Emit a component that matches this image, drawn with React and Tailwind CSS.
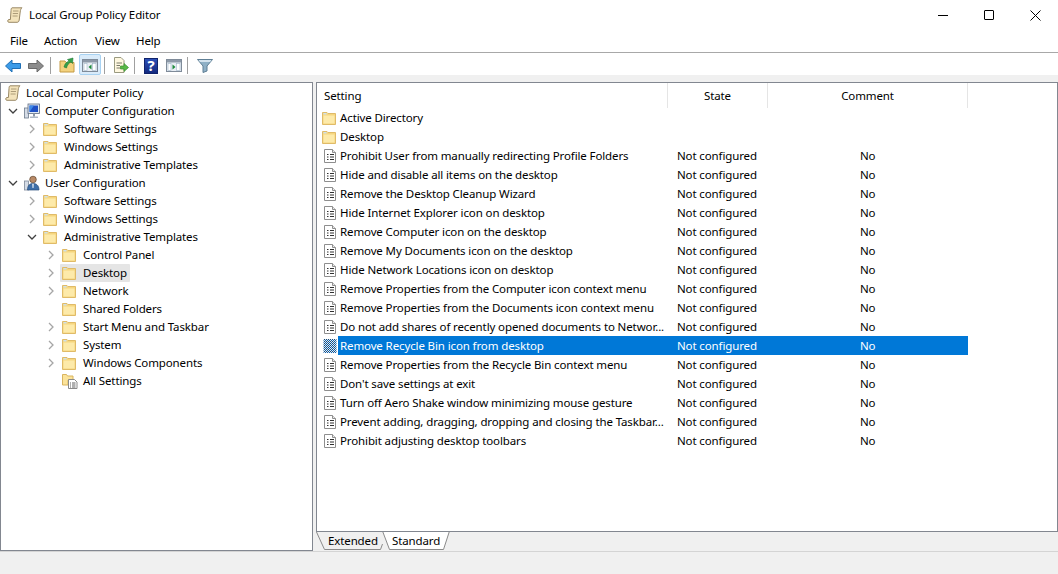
import React from 'react';

const Chevron = ({ open }) => (
    <svg width="10" height="10" viewBox="0 0 10 10" fill="none" stroke={open ? '#404040' : '#a6a6a6'} strokeWidth="1.3">
        {open ? <path d="M1 3 L5 7 L9 3" /> : <path d="M3 1 L7 5 L3 9" />}
    </svg>
);

const Folder = () => (
    <svg width="16" height="16" viewBox="0 0 16 16" className="shrink-0">
        <path d="M.5 2.5 H5 L6 3.5 H13.5 V14.5 H.5 Z" fill="#f6d67f" stroke="#e0bb68" />
        <path d="M1.5 5.5 H12.5 V13.5 H1.5 Z" fill="#fdeaaa" />
        <path d="M1.5 3 H4.5 V4.5 H1.5 Z" fill="#cfe0ea" />
    </svg>
);

const Scroll = () => (
    <svg width="16" height="16" viewBox="0 0 16 16" className="shrink-0">
        <path d="M5 .8 H15 C13.8 1.8 13.4 3 13.2 5 L12.2 13 C12 14.6 11.2 15.3 10 15.3 H1.8 C.4 15.3 .3 12.8 1.8 12.5 H3.4 L4 3.5 C4.1 2 4.2 1.2 5 .8 Z" fill="#f3e3bb" stroke="#8f7d58" strokeWidth=".9" />
        <path d="M6 4 H11.5 M5.8 6.5 H11 M5.6 9 H10.6" stroke="#9a8a68" strokeWidth=".8" />
    </svg>
);

const Computer = () => (
    <svg width="16" height="16" viewBox="0 0 16 16" className="shrink-0">
        <rect x="0.5" y="5" width="4" height="10" fill="#d5dce6" stroke="#6d7a8c" strokeWidth=".8" />
        <rect x="4" y="1" width="11.5" height="9.5" fill="#dfe7f2" stroke="#5e6b80" strokeWidth=".8" />
        <rect x="5.5" y="2.5" width="8.5" height="6.5" fill="#1e4fc4" />
        <path d="M5.5 9 L10 2.5 H5.5 Z" fill="#3f8ae8" />
        <path d="M6 13.5 H14 V15 H6 Z" fill="#aeb8c6" />
        <path d="M9 10.5 H11 V13.5 H9 Z" fill="#8d98a8" />
    </svg>
);

const User = () => (
    <svg width="16" height="16" viewBox="0 0 16 16" className="shrink-0">
        <rect x="0.5" y="6" width="4" height="9" fill="#d5dce6" stroke="#7d8898" strokeWidth=".8" />
        <circle cx="9" cy="4.5" r="3.3" fill="#b98a66" stroke="#5e4630" strokeWidth=".7" />
        <path d="M3.5 15 C3.5 10 6 8.5 9 8.5 C12 8.5 15 10 15 15 Z" fill="#3f6fa8" stroke="#2a4f7c" strokeWidth=".7" />
        <path d="M8.2 8.7 H9.8 L9.5 13 H8.5 Z" fill="#e8eef5" />
    </svg>
);

const AllSettings = () => (
    <svg width="16" height="16" viewBox="0 0 16 16" className="shrink-0">
        <path d="M.5 1.5 H4.5 L5.5 3 H11 V7 H6 V12 H.5 Z" fill="#fbe39a" stroke="#d9b45f" />
        <path d="M6.5 6.5 H12.5 L15 9 V15.5 H6.5 Z" fill="#fff" stroke="#8a8a8a" />
        <path d="M8 10 H9 M10 10 H13.5 M8 12 H9 M10 12 H13.5 M8 14 H9 M10 14 H13.5" stroke="#606060" />
    </svg>
);

const Policy = ({ selected }) => (
    <svg width="14" height="16" viewBox="0 0 14 16" className="shrink-0">
        {selected ? (
            <>
                <defs>
                    <pattern id="dither" width="2" height="2" patternUnits="userSpaceOnUse">
                        <rect width="2" height="2" fill="#dbe9f5" />
                        <rect width="1" height="1" fill="#0f5fa8" />
                        <rect x="1" y="1" width="1" height="1" fill="#1a4a78" />
                    </pattern>
                </defs>
                <rect x="0.5" y="1" width="13" height="14" fill="url(#dither)" />
            </>
        ) : (
            <>
                <path d="M1.5 1.5 H9.5 L12.5 4.5 V14.5 H1.5 Z" fill="#fff" stroke="#8e8e8e" />
                <path d="M9.5 1.5 V4.5 H12.5" fill="#e8e8e8" stroke="#8e8e8e" />
                <path d="M4 6.5 H5.5 M7 6.5 H11 M4 9 H5.5 M7 9 H11 M4 11.5 H5.5 M7 11.5 H11" stroke="#303030" />
            </>
        )}
    </svg>
);

const WindowIcon = ({ arrow }) => (
    <svg width="16" height="13" viewBox="0 0 16 13">
        <rect x=".5" y=".5" width="15" height="12" fill="#e9eef4" stroke="#7f8b99" />
        <rect x="1" y="1" width="14" height="2.5" fill="#8d99a8" />
        <rect x="2" y="4.5" width="3" height="7" fill="#fff" stroke="#9fb4c8" strokeWidth=".6" />
        <rect x="10.5" y="4.5" width="3.5" height="7" fill="#fff" stroke="#9fb4c8" strokeWidth=".6" />
        {arrow === 'left'
            ? <path d="M9.5 5.5 V10.5 L6.5 8 Z" fill="#1e8a3c" />
            : <path d="M6.5 5.5 V10.5 L9.5 8 Z" fill="#1e8a3c" />}
    </svg>
);

const Sep = () => <div className="w-px h-[17px] bg-[#a0a0a0]" />;

const TreeRow = ({ level, chevron, icon, label, selected }) => (
    <div className="flex items-center h-[18px]" style={{ paddingLeft: level * 19 }}>
        <div className="w-[23px] pl-[7px] flex items-center shrink-0">
            {chevron && <Chevron open={chevron === 'open'} />}
        </div>
        <div className={`flex items-center h-[18px] -ml-[2px] pl-[2px] pr-[3px] gap-[5px] ${selected ? 'bg-[#e5e5e5] rounded-[1px]' : ''}`}>
            {icon}
            <span>{label}</span>
        </div>
    </div>
);

const settings = [
    'Prohibit User from manually redirecting Profile Folders',
    'Hide and disable all items on the desktop',
    'Remove the Desktop Cleanup Wizard',
    'Hide Internet Explorer icon on desktop',
    'Remove Computer icon on the desktop',
    'Remove My Documents icon on the desktop',
    'Hide Network Locations icon on desktop',
    'Remove Properties from the Computer icon context menu',
    'Remove Properties from the Documents icon context menu',
    'Do not add shares of recently opened documents to Networ...',
    'Remove Recycle Bin icon from desktop',
    'Remove Properties from the Recycle Bin context menu',
    "Don't save settings at exit",
    'Turn off Aero Shake window minimizing mouse gesture',
    'Prevent adding, dragging, dropping and closing the Taskbar...',
    'Prohibit adjusting desktop toolbars',
];

export default function App() {
    return (
        <div className="w-[1058px] h-[574px] bg-white text-[11.5px] leading-none text-black flex flex-col overflow-hidden tracking-[-0.12px]" style={{ fontFamily: '"Noto Sans", sans-serif' }}>
            {/* Title bar */}
            <div className="h-[30px] flex items-center pl-[7px] shrink-0">
                <Scroll />
                <span className="ml-[6px]">Local Group Policy Editor</span>
                <div className="ml-auto flex items-center">
                    <div className="w-[46px] h-[30px] flex items-center justify-center">
                        <div className="w-[10px] h-px bg-black" />
                    </div>
                    <div className="w-[46px] h-[30px] flex items-center justify-center">
                        <div className="w-[10px] h-[10px] border border-black rounded-[1px]" />
                    </div>
                    <div className="w-[46px] h-[30px] flex items-center justify-center">
                        <svg width="11" height="11" viewBox="0 0 11 11" stroke="#000"><path d="M.5 .5 L10.5 10.5 M10.5 .5 L.5 10.5" /></svg>
                    </div>
                </div>
            </div>

            {/* Menu */}
            <div className="h-[23px] flex items-center gap-[16px] pl-[10px] border-b border-[#a8a8a8] shrink-0">
                <span className="w-[18px]">File</span>
                <span className="w-[35px]">Action</span>
                <span className="w-[25px]">View</span>
                <span>Help</span>
            </div>

            {/* Toolbar */}
            <div className="h-[22px] flex items-center pl-[5px] shrink-0">
                <svg width="16" height="14" viewBox="0 0 16 14" className="mt-[3px]"><path d="M.5 7 L7 1 V4.5 H15.5 V9.5 H7 V13 Z" fill="#3b9be8" stroke="#1f6fb5" /></svg>
                <svg width="16" height="14" viewBox="0 0 16 14" className="ml-[7px] mt-[3px]"><path d="M15.5 7 L9 1 V4.5 H.5 V9.5 H9 V13 Z" fill="#8c8c8c" stroke="#6a6a6a" /></svg>
                <div className="ml-[6px] mt-[3px]"><Sep /></div>
                <svg width="16" height="16" viewBox="0 0 16 16" className="ml-[8px] mt-[2px]">
                    <path d="M1 4 H6 L7 5.5 H15 V15 H1 Z" fill="#f3d27e" stroke="#c49b45" />
                    <path d="M5 10 C6 6 8 5 10 4 L8.5 2.5 L14 1 L13.5 6.5 L12 5 C10 6 8 8 7.5 11 Z" fill="#35a04a" stroke="#1f7a35" strokeWidth=".6" />
                </svg>
                <div className="ml-[4px] w-[22px] h-[21px] bg-[#d9ebfa] border border-[#a8d2f2] rounded-[2px] flex items-center justify-center">
                    <div className="mt-[3px]"><WindowIcon arrow="left" /></div>
                </div>
                <div className="ml-[3px] mt-[3px]"><Sep /></div>
                <svg width="16" height="16" viewBox="0 0 16 16" className="ml-[8px] mt-[2px]">
                    <path d="M1.5 .5 H8 L11 3.5 V15.5 H1.5 Z" fill="#fff8e0" stroke="#9a9a80" />
                    <path d="M3.5 6 H9 M3.5 8.5 H7 M3.5 11 H7" stroke="#7a7a6a" />
                    <path d="M7.5 9 H11 V6.5 L15.5 10.5 L11 14.5 V12 H7.5 Z" fill="#58b947" stroke="#3a8f2f" strokeWidth=".7" />
                </svg>
                <div className="ml-[5px] mt-[3px]"><Sep /></div>
                <div className="ml-[9px] mt-[3px] w-[14px] h-[16px] bg-gradient-to-b from-[#2c4fb8] to-[#142a80] border border-[#10236b] flex items-center justify-center text-white font-bold text-[15px]">?</div>
                <div className="ml-[8px] mt-[3px]"><WindowIcon arrow="right" /></div>
                <div className="ml-[5px] mt-[3px]"><Sep /></div>
                <svg width="16" height="14" viewBox="0 0 16 14" className="ml-[9px] mt-[3px]">
                    <path d="M.5 .5 H15.5 L10 7 V12 L6 13.5 V7 Z" fill="#8fb0c6" stroke="#5f7f95" />
                    <path d="M1.5 1 H14.5 L13 3 H3 Z" fill="#d4e3ee" />
                </svg>
            </div>

            {/* Panes */}
            <div className="flex-1 bg-[#f0f0f0] pt-[7px] flex min-h-0">
                <div className="w-[313px] h-[469px] bg-white border border-[#828790] pt-[1px] shrink-0">
                    <div className="flex items-center h-[18px] pl-[4px] gap-[5px]">
                        <Scroll />
                        <span>Local Computer Policy</span>
                    </div>
                    <TreeRow level={0} chevron="open" icon={<Computer />} label="Computer Configuration" />
                    <TreeRow level={1} chevron="closed" icon={<Folder />} label="Software Settings" />
                    <TreeRow level={1} chevron="closed" icon={<Folder />} label="Windows Settings" />
                    <TreeRow level={1} chevron="closed" icon={<Folder />} label="Administrative Templates" />
                    <TreeRow level={0} chevron="open" icon={<User />} label="User Configuration" />
                    <TreeRow level={1} chevron="closed" icon={<Folder />} label="Software Settings" />
                    <TreeRow level={1} chevron="closed" icon={<Folder />} label="Windows Settings" />
                    <TreeRow level={1} chevron="open" icon={<Folder />} label="Administrative Templates" />
                    <TreeRow level={2} chevron="closed" icon={<Folder />} label="Control Panel" />
                    <TreeRow level={2} chevron="closed" icon={<Folder />} label="Desktop" selected />
                    <TreeRow level={2} chevron="closed" icon={<Folder />} label="Network" />
                    <TreeRow level={2} icon={<Folder />} label="Shared Folders" />
                    <TreeRow level={2} chevron="closed" icon={<Folder />} label="Start Menu and Taskbar" />
                    <TreeRow level={2} chevron="closed" icon={<Folder />} label="System" />
                    <TreeRow level={2} chevron="closed" icon={<Folder />} label="Windows Components" />
                    <TreeRow level={2} icon={<AllSettings />} label="All Settings" />
                </div>

                <div className="ml-[3px] flex-1 flex flex-col min-w-0">
                    <div className="h-[450px] bg-white border border-[#828790]">
                        <div className="h-[25px] flex items-stretch">
                            <div className="w-[351px] pl-[7px] flex items-center border-r border-[#e5e5e5]">Setting</div>
                            <div className="w-[100px] flex items-center justify-center border-r border-[#e5e5e5]">State</div>
                            <div className="w-[200px] flex items-center justify-center border-r border-[#e5e5e5]">Comment</div>
                        </div>
                        {['Active Directory', 'Desktop'].map((name) => (
                            <div key={name} className="h-[19px] flex items-center pl-[5px] gap-[2px]">
                                <Folder />
                                <span>{name}</span>
                            </div>
                        ))}
                        {settings.map((name, i) => {
                            const selected = i === 10;
                            return (
                                <div key={name} className="h-[19px] flex items-center pl-[6px] w-[651px]">
                                    <Policy selected={selected} />
                                    <div className={`flex-1 h-[19px] flex items-center ml-[1px] ${selected ? 'bg-[#0078d7] text-white' : ''}`}>
                                        <span className="w-[339px] pl-[2px] whitespace-nowrap">{name}</span>
                                        <span className="w-[183px]">Not configured</span>
                                        <span>No</span>
                                    </div>
                                </div>
                            );
                        })}
                    </div>

                    {/* Tabs */}
                    <div className="h-[18px] flex items-start">
                        <div className="relative w-[67px] h-[18px] flex items-center pl-[12px]">
                            <svg width="67" height="18" viewBox="0 0 67 18" className="absolute inset-0">
                                <path d="M.5 0 L8.5 17.5 H64.5 L66.5 12" fill="#f0f0f0" stroke="#8a8a8a" />
                            </svg>
                            <span className="relative">Extended</span>
                        </div>
                        <div className="relative w-[68px] h-[18px] -ml-[1px] flex items-center pl-[10px]">
                            <svg width="68" height="18" viewBox="0 0 68 18" className="absolute inset-0">
                                <path d="M.5 -1 L7.5 17.5 H61.5 L67.5 -1 Z" fill="#fff" stroke="#8a8a8a" />
                            </svg>
                            <span className="relative">Standard</span>
                        </div>
                    </div>
                </div>
            </div>

            {/* Status bar */}
            <div className="h-[23px] bg-[#f0f0f0] border-t border-[#d4d4d4] shrink-0" />
        </div>
    );
}
